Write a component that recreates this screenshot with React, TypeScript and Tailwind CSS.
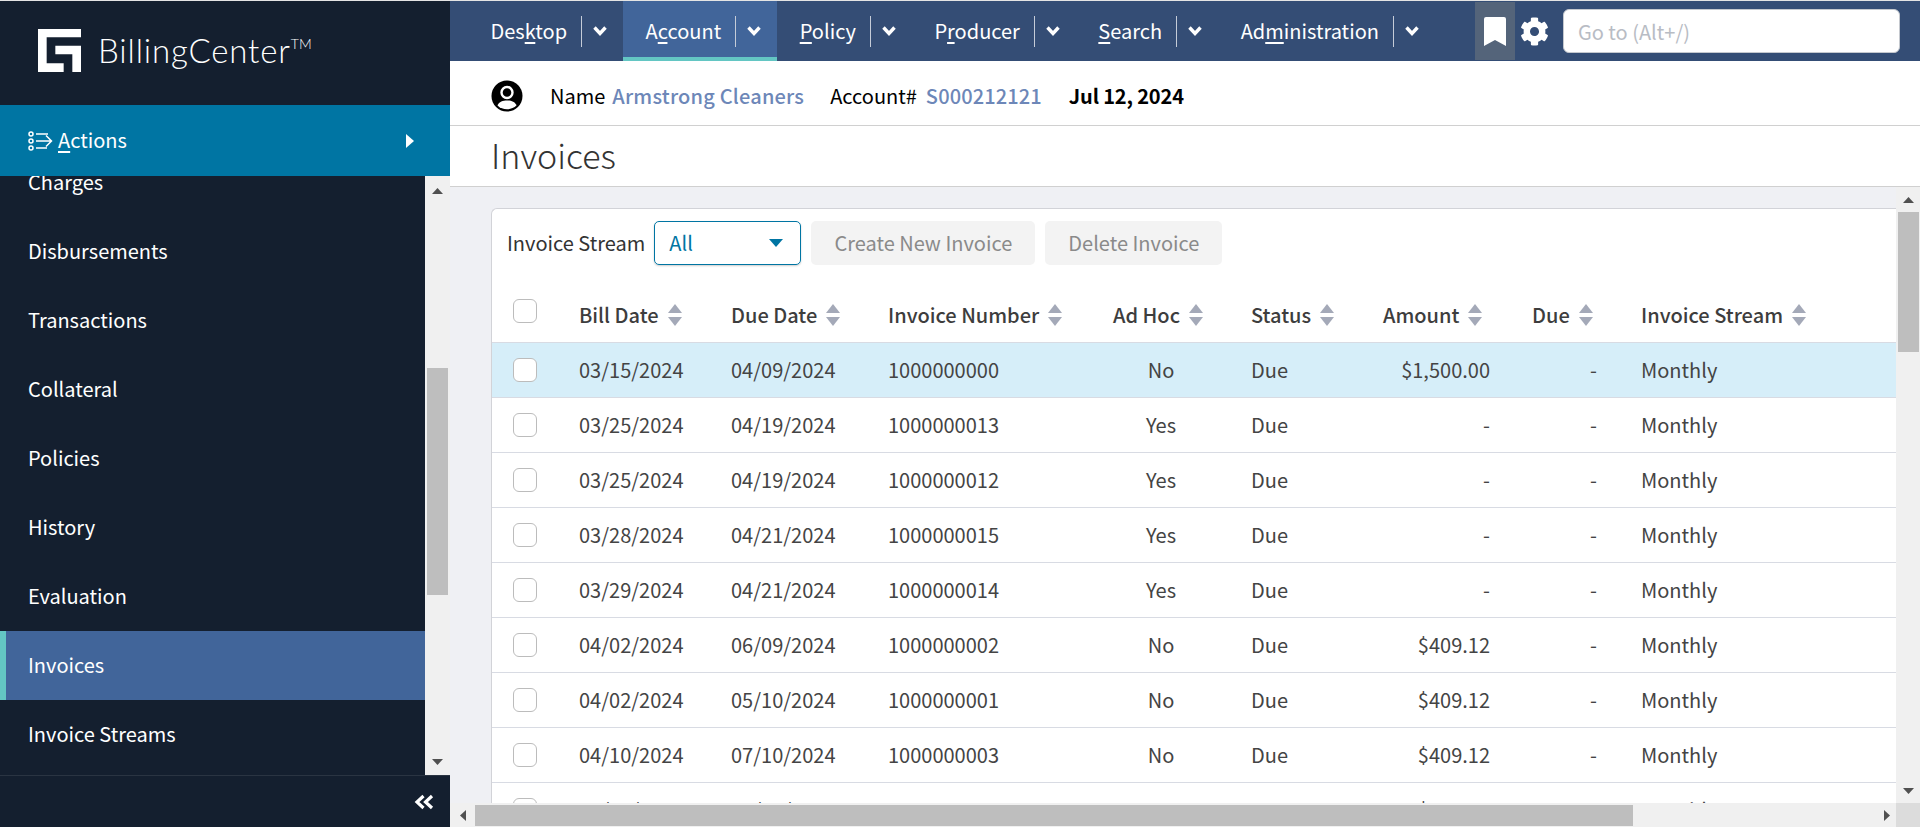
import { FaCog } from "react-icons/fa";

const NAV_ITEMS = [
  { before: "Des", key: "k", after: "top" },
  { before: "A", key: "c", after: "count", active: true },
  { before: "", key: "P", after: "olicy" },
  { before: "P", key: "r", after: "oducer" },
  { before: "", key: "S", after: "earch" },
  { before: "Ad", key: "m", after: "inistration" },
];

const SIDE_ITEMS = [
  "Charges",
  "Disbursements",
  "Transactions",
  "Collateral",
  "Policies",
  "History",
  "Evaluation",
  "Invoices",
  "Invoice Streams",
];

const COLUMNS = "grid grid-cols-[87px_152px_157px_225px_138px_132px_149px_109px_251px]";

const ROWS = [
  ["03/15/2024", "04/09/2024", "1000000000", "No", "$1,500.00"],
  ["03/25/2024", "04/19/2024", "1000000013", "Yes", "-"],
  ["03/25/2024", "04/19/2024", "1000000012", "Yes", "-"],
  ["03/28/2024", "04/21/2024", "1000000015", "Yes", "-"],
  ["03/29/2024", "04/21/2024", "1000000014", "Yes", "-"],
  ["04/02/2024", "06/09/2024", "1000000002", "No", "$409.12"],
  ["04/02/2024", "05/10/2024", "1000000001", "No", "$409.12"],
  ["04/10/2024", "07/10/2024", "1000000003", "No", "$409.12"],
  ["04/10/2024", "08/10/2024", "1000000004", "No", "$409.12"],
];

function Logo() {
  return (
    <svg width="43" height="43" viewBox="0 0 129 129" fill="#fff">
      <path d="M0 0H129V25H26V103H77V129H0Z" />
      <path d="M52 50H129V129H103V76H52Z" />
    </svg>
  );
}

function ActionsIcon() {
  return (
    <svg width="25" height="20" viewBox="0 0 25 20" fill="none" stroke="#fff" strokeWidth="1.5">
      <circle cx="3" cy="3" r="2" />
      <circle cx="3" cy="10" r="2" />
      <circle cx="3" cy="17" r="2" />
      <path d="M8 3H20M8 10H23M8 17H19M18 4.5L23.5 10L18 15.5" />
    </svg>
  );
}

function Chevron() {
  return (
    <svg width="16" height="12" viewBox="0 0 16 12" fill="none" stroke="#fff" strokeWidth="3.4">
      <path d="M2.5 2.5L8 8.5L13.5 2.5" />
    </svg>
  );
}

function Avatar() {
  return (
    <svg width="32" height="32" viewBox="0 0 32 32">
      <circle cx="16" cy="16" r="15.5" fill="#000" />
      <circle cx="16" cy="12.5" r="5.5" fill="#000" stroke="#fff" strokeWidth="2.4" />
      <path d="M6.5 25.5C8 21.5 12 20.5 16 20.5C20 20.5 24 21.5 25.5 25.5C23 28 19.5 29.2 16 29.2C12.5 29.2 9 28 6.5 25.5Z" fill="#fff" />
    </svg>
  );
}

function SortIcon() {
  return (
    <svg width="14" height="22" viewBox="0 0 14 22" fill="#a4a9b8" className="ml-[9px] shrink-0">
      <path d="M7 0L14 9H0Z" />
      <path d="M0 13H14L7 22Z" />
    </svg>
  );
}

function Checkbox() {
  return <div className="h-[24px] w-[24px] rounded-[6px] border border-[#bcbcbc] bg-white" />;
}

function Arrow({ dir }: { dir: "up" | "down" | "left" | "right" }) {
  const paths = {
    up: "M5.5 0L11 6H0Z",
    down: "M0 0H11L5.5 6Z",
    left: "M6 0V11L0 5.5Z",
    right: "M0 0L6 5.5L0 11Z",
  };
  const vertical = dir === "up" || dir === "down";
  return (
    <svg width={vertical ? 11 : 6} height={vertical ? 6 : 11} fill="#505050">
      <path d={paths[dir]} />
    </svg>
  );
}

function Sidebar() {
  return (
    <aside className="flex h-full w-[450px] shrink-0 flex-col bg-[#141f2f] text-white">
      <div className="flex h-[104px] shrink-0 items-start pl-[38px] pt-[28px]">
        <Logo />
        <div className="ml-[17px] mt-[3px] flex items-start font-['Lato',sans-serif] text-[33px] font-light leading-[36px] tracking-[0.85px]">
          BillingCenter
          <span className="text-[14px] leading-[24px] tracking-normal">TM</span>
        </div>
      </div>

      <div className="flex h-[71px] shrink-0 items-center justify-between bg-[#0075a3] pl-[28px] pr-[36px]">
        <div className="flex items-center gap-[5px]">
          <ActionsIcon />
          <span className="pb-[2px]">
            <span className="underline underline-offset-[3px]">A</span>ctions
          </span>
        </div>
        <svg width="8" height="14" fill="#fff">
          <path d="M0 0L8 7L0 14Z" />
        </svg>
      </div>

      <div className="flex min-h-0 flex-1">
        <div className="min-w-0 flex-1 overflow-hidden">
          <div className="mt-[-28px]">
            {SIDE_ITEMS.map((item) => (
              <div
                key={item}
                className={
                  item === "Invoices"
                    ? "flex h-[69px] items-center border-l-[6px] border-[#63c6c3] bg-[#41659a] pb-[2px] pl-[22px]"
                    : "flex h-[69px] items-center pb-[2px] pl-[28px]"
                }
              >
                {item}
              </div>
            ))}
          </div>
        </div>
        <div className="flex w-[25px] shrink-0 flex-col items-center bg-[#f0f0f0]">
          <div className="flex h-[26px] items-end pb-[8px]">
            <Arrow dir="up" />
          </div>
          <div className="mt-[166px] h-[227px] w-[21px] bg-[#bebebe]" />
          <div className="flex-1" />
          <div className="flex h-[24px] items-start pt-[8px]">
            <Arrow dir="down" />
          </div>
        </div>
      </div>

      <div className="flex h-[52px] shrink-0 items-center justify-end border-t border-[#2a3442] pr-[16px]">
        <svg width="20" height="16" viewBox="0 0 20 16" fill="none" stroke="#fff" strokeWidth="3.2">
          <path d="M9.5 2L3 8L9.5 14M18 2L11.5 8L18 14" />
        </svg>
      </div>
    </aside>
  );
}

function TopNav() {
  return (
    <nav className="flex h-[60px] shrink-0 items-center bg-[#344d75] pl-[18px] text-white">
      {NAV_ITEMS.map((item) => (
        <div
          key={item.after}
          className={
            item.active
              ? "flex h-full items-center border-b-[4px] border-[#63c6c3] bg-[#41659a] pl-[22.5px] pt-[4px]"
              : "flex h-full items-center pl-[22.5px]"
          }
        >
          <span>
            {item.before}
            <span className="underline underline-offset-[3px]">{item.key}</span>
            {item.after}
          </span>
          <div className="ml-[14px] h-[31px] w-px bg-[#c5ccd8]" />
          <div className="flex w-[41px] pl-[10px]">
            <Chevron />
          </div>
        </div>
      ))}
      <div className="ml-[40px] flex h-[58px] w-[40px] items-center justify-center bg-[#54647a]">
        <svg width="22" height="29" viewBox="0 0 22 29" fill="#fff">
          <path d="M2 0H20Q22 0 22 2V29L11 23L0 29V2Q0 0 2 0Z" />
        </svg>
      </div>
      <FaCog className="ml-[5px] text-[29px]" />
      <input
        placeholder="Go to (Alt+/)"
        className="ml-[14px] h-[44px] w-[337px] rounded-[6px] border border-[#c4c8ce] bg-white px-[14px] text-[20px] outline-none placeholder:text-[#b8bcc4]"
      />
    </nav>
  );
}

function InvoiceTable() {
  return (
    <div className="w-[1500px] rounded-tl-[6px] border-l border-t border-[#d2d3d8] bg-white pt-[12px] text-[#444]">
      <div className="flex items-center pl-[15px]">
        <span className="text-[#333]">Invoice Stream</span>
        <div className="ml-[9px] flex h-[44px] w-[147px] items-center justify-between rounded-[5px] border border-[#0075a3] pl-[14px] pr-[17px] text-[#0075a3] shadow-[0_1px_2px_rgba(0,0,0,0.2)]">
          All
          <svg width="14" height="8" fill="#0075a3">
            <path d="M0 0H14L7 8Z" />
          </svg>
        </div>
        <button className="ml-[10px] h-[44px] w-[224px] rounded-[5px] bg-[#f3f3f3] text-[#8a8a8a]">Create New Invoice</button>
        <button className="ml-[10px] h-[44px] w-[177px] rounded-[5px] bg-[#f3f3f3] text-[#8a8a8a]">Delete Invoice</button>
      </div>

      <div className={`${COLUMNS} mt-[23px] h-[55px] items-center border-b border-[#d8dbe3] font-medium text-[#3d3d3d]`}>
        <div className="mt-[-8px] pl-[21px]">
          <Checkbox />
        </div>
        {["Bill Date", "Due Date", "Invoice Number", "Ad Hoc", "Status", "Amount", "Due", "Invoice Stream"].map((h) => (
          <div key={h} className="flex items-center">
            {h}
            <SortIcon />
          </div>
        ))}
      </div>

      {ROWS.map((row, i) => (
        <div
          key={row[2]}
          className={`${COLUMNS} h-[55px] items-center border-b border-[#d8dbe3] ${i === 0 ? "bg-[#d6eef9]" : ""}`}
        >
          <div className="pl-[21px]">
            <Checkbox />
          </div>
          <div>{row[0]}</div>
          <div>{row[1]}</div>
          <div>{row[2]}</div>
          <div className="pr-[42px] text-center">{row[3]}</div>
          <div>Due</div>
          <div className="pr-[42px] text-right">{row[4]}</div>
          <div className="pr-[44px] text-right">-</div>
          <div>Monthly</div>
        </div>
      ))}
    </div>
  );
}

export default function App() {
  return (
    <div className="flex h-[827px] w-[1920px] overflow-hidden bg-[#e4e4e4] pt-px font-['Noto_Sans_CJK_SC',sans-serif] text-[20px] leading-[26px]">
      <Sidebar />
      <main className="flex h-full min-w-0 flex-1 flex-col bg-white">
        <TopNav />

        <div className="flex h-[65px] shrink-0 items-center border-b border-[#d0d0d0] pl-[41px] pr-4 pt-[5px] text-black">
          <Avatar />
          <span className="ml-[27px]">Name</span>
          <span className="ml-[7px] font-medium tracking-[0.2px] text-[#6d87b8]">Armstrong Cleaners</span>
          <span className="ml-[26px]">Account#</span>
          <span className="ml-[9px] font-medium tracking-[0.12px] text-[#6d87b8]">S000212121</span>
          <span className="ml-[27px] font-semibold tracking-[-0.15px]">Jul 12, 2024</span>
        </div>

        <div className="flex h-[61px] shrink-0 items-center border-b border-[#d0d0d0] pb-[2px] pl-[41px]">
          <h1 className="text-[34px] font-light leading-[44px] text-[#333]">Invoices</h1>
        </div>

        <div className="flex min-h-0 flex-1 bg-[#eff0f4]">
          <div className="min-w-0 flex-1 overflow-hidden pl-[41px] pt-[21px]">
            <InvoiceTable />
          </div>
          <div className="flex w-[24px] shrink-0 flex-col items-center bg-[#f0f0f0]">
            <div className="flex h-[25px] items-center">
              <Arrow dir="up" />
            </div>
            <div className="h-[140px] w-[21px] bg-[#bebebe]" />
            <div className="flex-1" />
            <div className="flex h-[24px] items-start pt-[9px]">
              <Arrow dir="down" />
            </div>
          </div>
        </div>

        <div className="flex h-[24px] shrink-0 items-center bg-[#f0f0f0]">
          <div className="flex w-[25px] shrink-0 justify-center">
            <Arrow dir="left" />
          </div>
          <div className="h-[21px] w-[1158px] bg-[#bebebe]" />
          <div className="flex flex-1 justify-end pr-[6px]">
            <Arrow dir="right" />
          </div>
          <div className="h-full w-[24px] shrink-0 bg-[#dcdcdc]" />
        </div>
      </main>
    </div>
  );
}
